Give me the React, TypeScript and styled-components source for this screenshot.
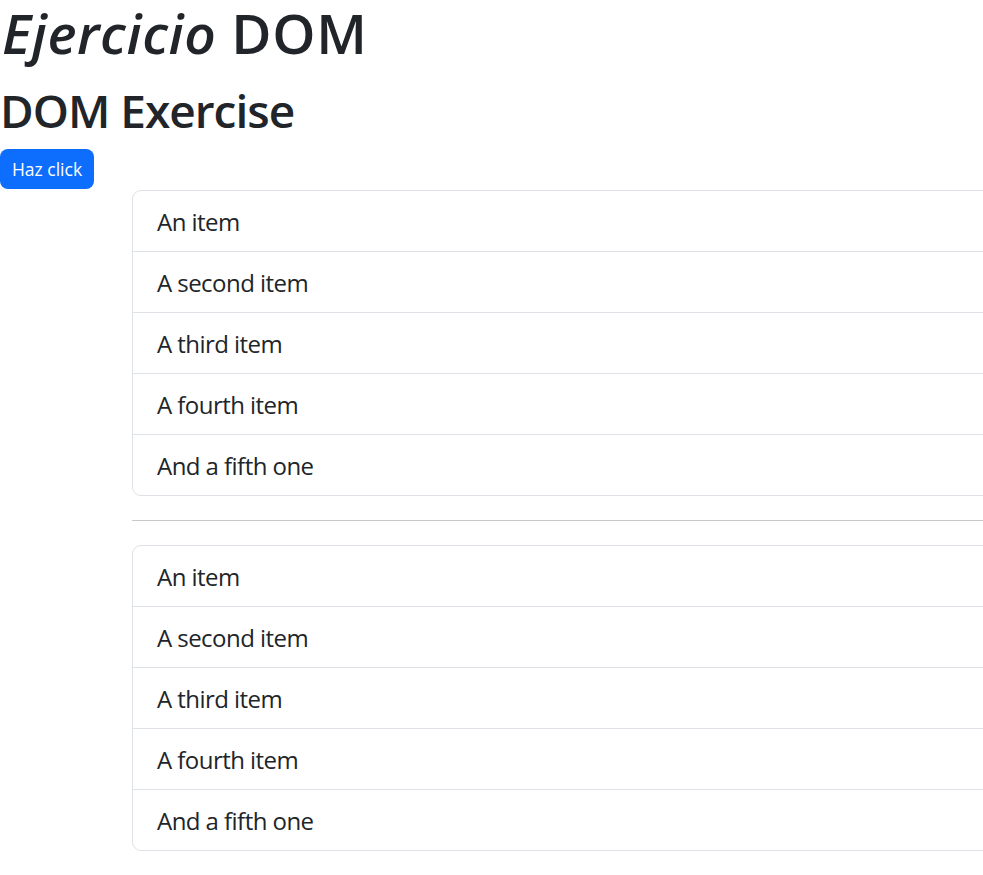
import React from "react";
import styled, { createGlobalStyle } from "styled-components";

const Global = createGlobalStyle`
  html, body {
    margin: 0;
    padding: 0;
    background: #ffffff;
    overflow-x: hidden;
  }
  body {
    font-family: "Open Sans", "Noto Sans", "Liberation Sans", sans-serif;
    color: #212529;
  }
  * { box-sizing: border-box; }
`;

const Page = styled.main`
  display: flex;
  flex-direction: column;
  align-items: flex-start;
  overflow: hidden;
`;

const Title = styled.h1`
  margin: 0 0 17px 0;
  padding: 0 8px 0 2px;
  font-size: 55px;
  line-height: 65px;
  font-weight: 600;
  letter-spacing: 0.6px;
  color: #212529;
  white-space: nowrap;
  em { font-style: italic; }
`;

const Subtitle = styled.h2`
  margin: 0 0 10px 0;
  font-size: 46px;
  line-height: 57px;
  font-weight: 600;
  letter-spacing: -1px;
  color: #212529;
  white-space: nowrap;
`;

const Button = styled.button`
  display: inline-flex;
  align-items: center;
  justify-content: center;
  height: 40px;
  width: 94px;
  padding: 0;
  margin: 0 0 1px 0;
  border: none;
  border-radius: 8px;
  background: #0d6efd;
  color: #ffffff;
  font-family: inherit;
  font-size: 17.5px;
  font-weight: 400;
  cursor: pointer;
`;

const List = styled.ul`
  list-style: none;
  margin: 0 0 0 132px;
  padding: 0;
  width: 1000px;
  border: 1px solid #dee2e6;
  border-radius: 9px;
  display: flex;
  flex-direction: column;
`;

const Item = styled.li`
  padding: 13px 24px 11px;
  font-size: 24px;
  line-height: 36px;
  letter-spacing: -0.55px;
  color: #212529;
  & + & { border-top: 1px solid #dee2e6; }
`;

const Divider = styled.hr`
  margin: 24px 0 24px 132px;
  border: none;
  border-top: 1px solid #c8c9ca;
  width: 1000px;
`;

const items = ["An item", "A second item", "A third item", "A fourth item", "And a fifth one"];

export default function App() {
  return (
    <Page>
      <Global />
      <Title>
        <em>Ejercicio</em> DOM
      </Title>
      <Subtitle>DOM Exercise</Subtitle>
      <Button>Haz click</Button>
      <List>
        {items.map((t) => (
          <Item key={t}>{t}</Item>
        ))}
      </List>
      <Divider />
      <List>
        {items.map((t) => (
          <Item key={t}>{t}</Item>
        ))}
      </List>
    </Page>
  );
}
